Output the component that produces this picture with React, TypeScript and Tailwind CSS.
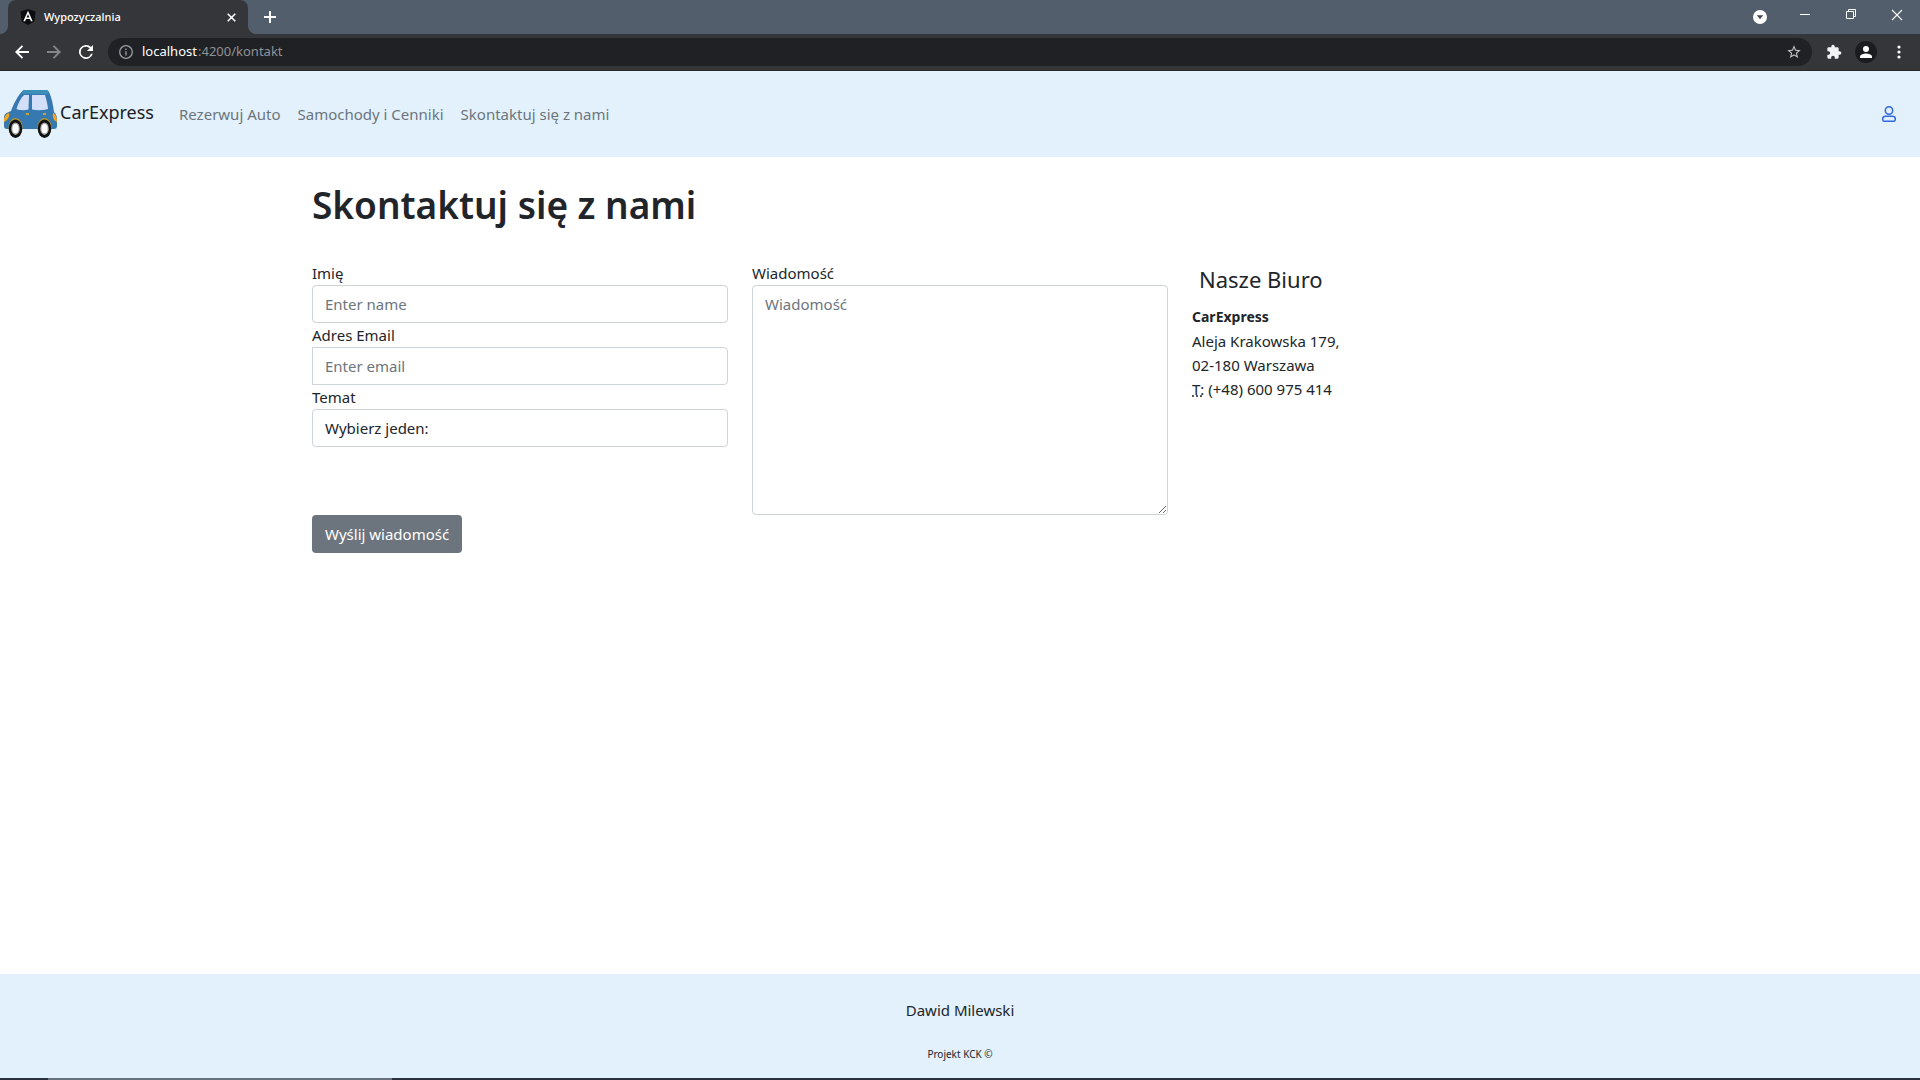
import React from "react";

const navLinks = ["Rezerwuj Auto", "Samochody i Cenniki", "Skontaktuj się z nami"];

const control =
  "block h-[38px] w-full border border-[#ced4da] bg-white px-3 text-[15px] text-[#212529] placeholder-[#6c757d] outline-none";

function AngularLogo() {
  return (
    <svg width="16" height="16" viewBox="0 0 16 16" aria-hidden="true">
      <path d="M8 0 15.5 2.6 14.4 12.4 8 16 1.6 12.4.5 2.6Z" fill="#0b0d10" />
      <path d="M8 1.8 3.3 12.3h1.8l.95-2.4h3.9l.95 2.4h1.8ZM8 5.2l1.4 3.3H6.6Z" fill="#fff" fillRule="evenodd" />
    </svg>
  );
}

function TabBar() {
  return (
    <div className="flex h-[34px] bg-[#525e6b] text-white">
      <div className="flex w-2 items-end bg-[#35363a]">
        <div className="h-full w-full rounded-br-lg bg-[#525e6b]" />
      </div>
      <div className="flex w-60 items-center gap-2 rounded-t-lg bg-[#35363a] pr-2 pl-3">
        <AngularLogo />
        <span className="flex-1 text-[11px] font-medium">Wypozyczalnia</span>
        <button aria-label="Zamknij kartę" className="p-1">
          <svg width="9" height="9" viewBox="0 0 9 9" stroke="#fff" strokeWidth="1.6">
            <path d="M.7.7l7.6 7.6M8.3.7L.7 8.3" />
          </svg>
        </button>
      </div>
      <div className="flex w-2 items-end bg-[#35363a]">
        <div className="h-full w-full rounded-bl-lg bg-[#525e6b]" />
      </div>
      <button aria-label="Nowa karta" className="px-2">
        <svg width="12" height="12" viewBox="0 0 12 12" stroke="#fff" strokeWidth="2">
          <path d="M6 0v12M0 6h12" />
        </svg>
      </button>
      <div className="flex-1" />
      <div className="flex gap-8 pr-[17px]">
        <button aria-label="Szukaj kart">
          <svg width="14" height="14" viewBox="0 0 14 14">
            <circle cx="7" cy="7" r="7" fill="#fff" />
            <path d="M3.8 5.2h6.4L7 9.3Z" fill="#424b55" />
          </svg>
        </button>
        <button aria-label="Minimalizuj" className="pb-1">
          <svg width="14" height="14" viewBox="0 0 14 14" stroke="#fff">
            <path d="M1 6.5h10" />
          </svg>
        </button>
        <button aria-label="Przywróć" className="pb-2">
          <svg width="14" height="12" viewBox="0 0 14 12" stroke="#fff" fill="none">
            <path d="M1.5 4.5h7v7h-7zM3.5 4V2.5h7v7H9" />
          </svg>
        </button>
        <button aria-label="Zamknij" className="pb-1">
          <svg width="12" height="12" viewBox="0 0 12 12" stroke="#fff" strokeWidth="1.1">
            <path d="M1 1l10 10M11 1L1 11" />
          </svg>
        </button>
      </div>
    </div>
  );
}

function Toolbar() {
  return (
    <div className="flex h-[37px] items-center border-b border-[#27282b] bg-[#35363a] pr-[19px] pl-[15px]">
      <div className="flex w-[93px] gap-[18px]">
        <button aria-label="Wstecz">
          <svg width="14" height="14" viewBox="0 0 14 14" stroke="#fff" strokeWidth="1.9" fill="none">
            <path d="M14 7H1.5M7.5 .8L1.3 7l6.2 6.2" />
          </svg>
        </button>
        <button aria-label="Dalej">
          <svg width="14" height="14" viewBox="0 0 14 14" stroke="#85868a" strokeWidth="1.9" fill="none">
            <path d="M0 7h12.5M6.5 .8L12.7 7l-6.2 6.2" />
          </svg>
        </button>
        <button aria-label="Odśwież">
          <svg width="14" height="14" viewBox="0 0 14 14" fill="#fff">
            <path d="M11.95 2.05A7 7 0 1 0 13.77 8.75h-1.82A5.25 5.25 0 1 1 7 1.75c1.45 0 2.75.6 3.7 1.55L7.9 6.1H14V0Z" />
          </svg>
        </button>
      </div>
      <div className="flex h-7 flex-1 items-center rounded-full bg-[#202124] pr-[10px] pl-[11px]">
        <svg width="14" height="14" viewBox="0 0 14 14" fill="none" stroke="#9aa0a6" strokeWidth="1.3" aria-hidden="true">
          <circle cx="7" cy="7" r="6.3" />
          <path d="M7 6.2v4.3M7 3.5V5" />
        </svg>
        <input
          aria-label="Adres strony: host"
          readOnly
          value="localhost"
          className="ml-[9px] w-14 bg-transparent text-[13px] text-white outline-none"
        />
        <span className="flex-1 text-[13px] text-[#8f9397]">:4200/kontakt</span>
        <button aria-label="Dodaj do zakładek">
          <svg width="16" height="16" viewBox="0 0 24 24" fill="#c5c8cc">
            <path d="M22 9.24l-7.19-.62L12 2 9.19 8.63 2 9.24l5.46 4.73L5.82 21 12 17.27 18.18 21l-1.63-7.03L22 9.24zM12 15.4l-3.76 2.27 1-4.28-3.32-2.88 4.38-.38L12 6.1l1.71 4.04 4.38.38-3.32 2.88 1 4.28L12 15.4z" />
          </svg>
        </button>
      </div>
      <button aria-label="Rozszerzenia" className="ml-[14px]">
        <svg width="16" height="16" viewBox="0 0 24 24" fill="#f1f3f4">
          <path d="M20.5 11H19V7c0-1.1-.9-2-2-2h-4V3.5C13 2.12 11.88 1 10.5 1S8 2.12 8 3.5V5H4c-1.1 0-1.99.9-1.99 2v3.8H3.5c1.49 0 2.7 1.21 2.7 2.7s-1.21 2.7-2.7 2.7H2V20c0 1.1.9 2 2 2h3.8v-1.5c0-1.49 1.21-2.7 2.7-2.7 1.49 0 2.7 1.21 2.7 2.7V22H17c1.1 0 2-.9 2-2v-4h1.5c1.38 0 2.5-1.12 2.5-2.5S21.88 11 20.5 11z" />
        </svg>
      </button>
      <button aria-label="Profil" className="ml-[13px]">
        <svg width="22" height="22" viewBox="0 0 22 22">
          <circle cx="11" cy="11" r="11" fill="#1b1c1f" />
          <circle cx="11" cy="8" r="3" fill="#fff" />
          <path d="M5 17v-1.5c0-2 4-3 6-3s6 1 6 3V17Z" fill="#fff" />
        </svg>
      </button>
      <button aria-label="Menu" className="ml-5">
        <svg width="4" height="14" viewBox="0 0 4 14" fill="#fff">
          <circle cx="2" cy="2" r="1.6" />
          <circle cx="2" cy="7" r="1.6" />
          <circle cx="2" cy="12" r="1.6" />
        </svg>
      </button>
    </div>
  );
}

function CarLogo() {
  return (
    <svg width="54" height="50" viewBox="0 0 54 50" aria-hidden="true">
      <path
        d="M19.5 1H43l2 2c3 6 4 13 5 20 2 2 3 4 3 8v6c0 2-1 3-3 3H3c-2 0-3-1-3-3V29c0-4 2-5 7-7 3-8 7-16 12.5-21Z"
        fill="#3679b0"
      />
      <path d="M19.5 1H43l2 2-1.5 2H18Z" fill="#3b8fb9" />
      <path d="M12.5 20C14 14 17 9 20 6h5l-.5 14.5c-4 1-9 1-12-.5Z" fill="#d3def9" />
      <path d="M28 6h13c1.5 5 2.5 9 3 14-5 1.5-11 1.5-16 .5Z" fill="#d3def9" />
      <path d="M0 30c1-4 3-6 5-6 1 3-1 7-5 9Z" fill="#f3a51f" />
      <path d="M49 24c3 1 4 5 4 9-3-1-5-5-4-9Z" fill="#f3a51f" />
      <path d="M22 24h3v2h-3zM39 24h3v2h-3z" fill="#c9a23a" />
      <ellipse cx="11.5" cy="38.5" rx="7" ry="9.5" fill="#b8942e" />
      <ellipse cx="40.5" cy="38.5" rx="7" ry="9.5" fill="#b8942e" />
      <ellipse cx="11.5" cy="39.7" rx="6.7" ry="9.3" fill="#111" />
      <ellipse cx="40.5" cy="39.7" rx="6.7" ry="9.3" fill="#111" />
      <ellipse cx="11.5" cy="39.7" rx="4.3" ry="6.2" fill="#aaa" />
      <ellipse cx="40.5" cy="39.7" rx="4.3" ry="6.2" fill="#aaa" />
      <ellipse cx="11.5" cy="39.7" rx="3" ry="4.6" fill="#fff" />
      <ellipse cx="40.5" cy="39.7" rx="3" ry="4.6" fill="#fff" />
    </svg>
  );
}

function Navbar() {
  return (
    <nav className="flex h-[86px] items-center bg-[#e3f1fc] pr-6 pl-1">
      <a href="#start" className="flex items-center gap-[2px] pr-[25px] text-[18px] text-[#1b2024]">
        <CarLogo />
        <span className="pb-1">CarExpress</span>
      </a>
      <div className="flex gap-[17px] text-[15px] text-[#6c757d]">
        {navLinks.map((label) => (
          <a key={label} href="#link">
            {label}
          </a>
        ))}
      </div>
      <a href="#konto" aria-label="Konto" className="ml-auto">
        <svg width="14" height="16" viewBox="0 0 14 16" fill="none" stroke="#3069dd" strokeWidth="1.5">
          <circle cx="7" cy="4.5" r="3.7" />
          <path d="M3.5 10.2h7c1.5 0 2.8 1.2 2.8 2.7 0 1.3-.4 2.3-1.3 2.3H2c-.9 0-1.3-1-1.3-2.3 0-1.5 1.3-2.7 2.8-2.7Z" />
        </svg>
      </a>
    </nav>
  );
}

function ContactForm() {
  return (
    <form className="col-span-2 grid grid-cols-2 gap-x-6 text-[15px] leading-6">
      <div>
        <label htmlFor="name" className="block">Imię</label>
        <input id="name" placeholder="Enter name" className={`${control} rounded`} />
        <label htmlFor="email" className="block">Adres Email</label>
        <input id="email" type="email" placeholder="Enter email" className={`${control} rounded-r`} />
        <label htmlFor="subject" className="block">Temat</label>
        <select id="subject" className={`${control} appearance-none rounded`}>
          <option>Wybierz jeden:</option>
        </select>
      </div>
      <div>
        <label htmlFor="message" className="block">Wiadomość</label>
        <textarea
          id="message"
          placeholder="Wiadomość"
          className="block h-[230px] w-full resize rounded border border-[#ced4da] bg-white px-3 py-1.5 placeholder-[#6c757d] outline-none"
        />
      </div>
      <button type="button" className="h-[38px] justify-self-start rounded bg-[#6c757d] px-[13px] text-white">
        Wyślij wiadomość
      </button>
    </form>
  );
}

function Office() {
  return (
    <aside className="text-[15px] leading-6">
      <h2 className="mb-3 pt-1 pl-[7px] text-[22px] leading-7">Nasze Biuro</h2>
      <address className="not-italic">
        <strong className="block text-[14px] leading-6">CarExpress</strong>
        Aleja Krakowska 179,
        <br />
        02-180 Warszawa
        <br />
        <abbr title="Telefon" className="underline decoration-dotted">T:</abbr> (+48) 600 975 414
      </address>
    </aside>
  );
}

export default function App() {
  return (
    <div className="flex min-h-screen flex-col bg-white font-['Noto_Sans','Open_Sans',sans-serif] text-[#212529]">
      <TabBar />
      <Toolbar />
      <Navbar />
      <main className="mx-auto w-full max-w-[1320px] flex-1 px-3">
        <h1 className="pt-6 pb-8 text-[37px] leading-12 font-semibold">Skontaktuj się z nami</h1>
        <div className="grid grid-cols-3 gap-x-6">
          <ContactForm />
          <Office />
        </div>
      </main>
      <footer className="flex h-[104px] flex-col items-center bg-[#e3f1fc] pt-6">
        <p className="text-[15px] leading-6">Dawid Milewski</p>
        <p className="mt-5 text-[10px] leading-6">Projekt KCK ©</p>
      </footer>
      <div className="flex h-0.5 bg-[#27303b]">
        <div className="ml-12 w-[344px] bg-[#66727e]" />
      </div>
    </div>
  );
}
